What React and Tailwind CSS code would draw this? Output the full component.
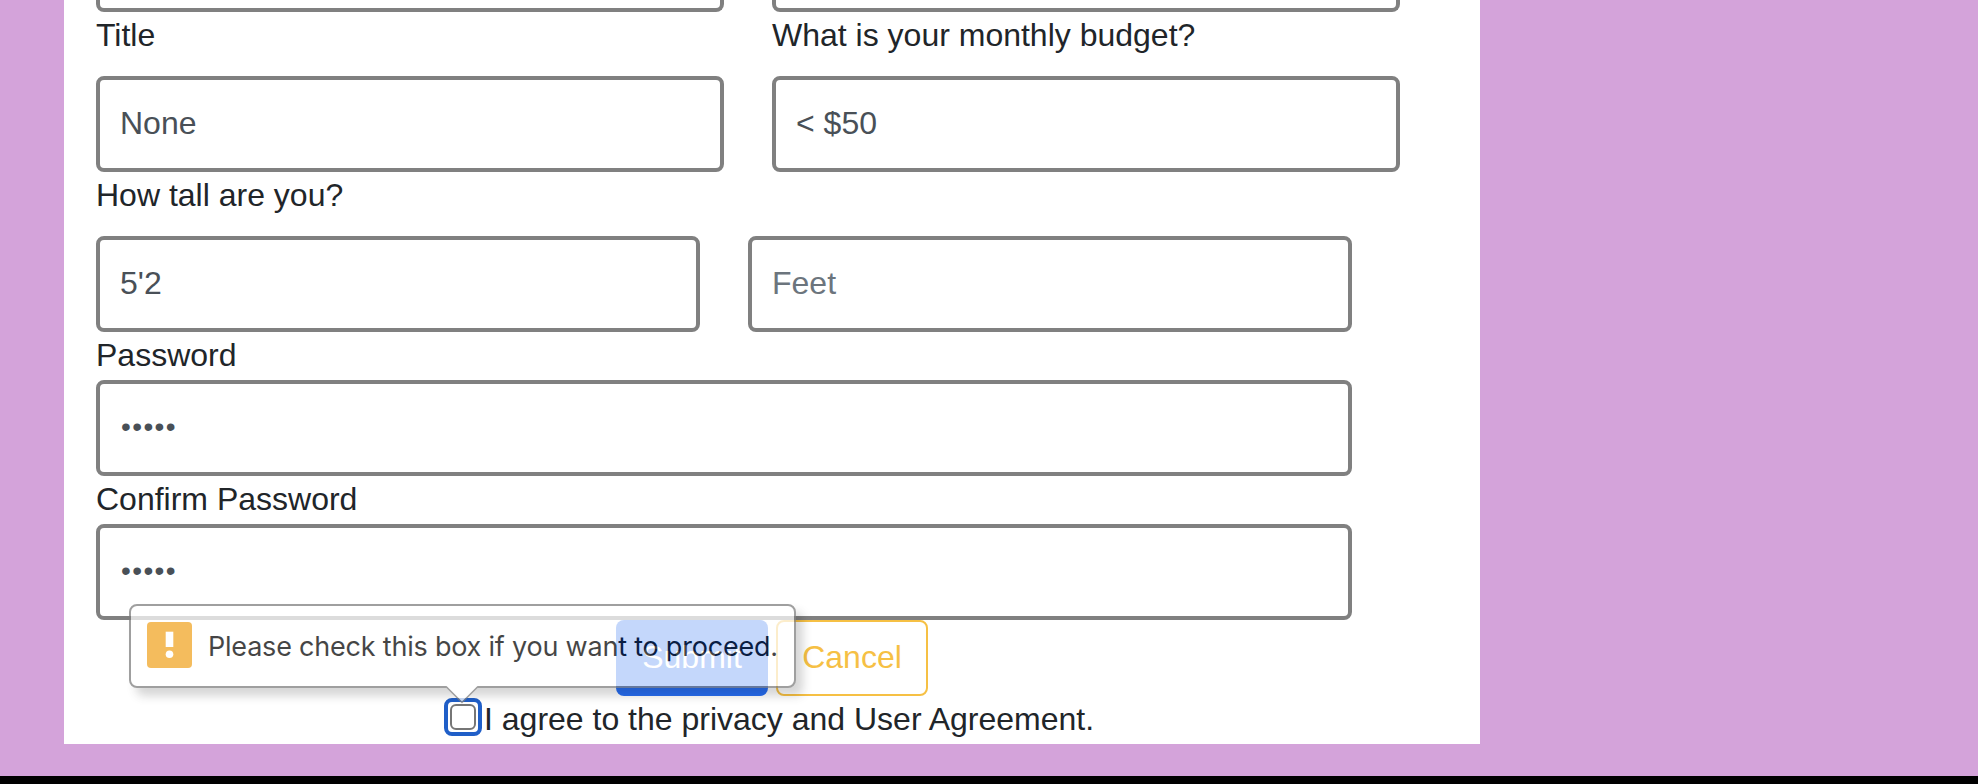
import React from "react";

const fieldBase =
  "block h-24 min-w-0 rounded-lg border-4 border-[#808080] bg-white text-[#495057] outline-none placeholder:text-[#6c757d] placeholder:opacity-100";
const textField = fieldBase + " px-5 pb-0.5 text-[32px]";
const passwordField = fieldBase + " w-[1256px] pl-[21px] pr-5 pb-[3px] text-[28px] tracking-[1.4px]";

function Label({ children }) {
  return <label className="block h-12 text-[32px] leading-[46px] text-[#212529]">{children}</label>;
}

function ValidationBubble({ children }) {
  return (
    <div className="absolute left-[65px] top-[604px] h-[84px] w-[667px] opacity-[0.725]">
      <div className="flex h-full items-start rounded-lg border-2 border-[#7c7c7c] bg-white pl-4 pt-4 shadow-[7px_8px_10px_rgba(0,0,0,0.22)]">
        <svg className="h-[46px] w-[45px] shrink-0" viewBox="0 0 45 46">
          <rect width="45" height="46" rx="4" fill="#f1a421" />
          <rect x="18.7" y="9.7" width="7.6" height="15.3" fill="#fff" />
          <circle cx="22.5" cy="32.3" r="3.8" fill="#fff" />
        </svg>
        <span className="ml-4 mt-[7px] whitespace-nowrap font-['Inter',sans-serif] text-[27px] leading-9 tracking-[-0.21px] text-black">
          {children}
        </span>
      </div>
      <svg className="absolute left-[316px] top-[82px] h-[18px] w-9" viewBox="0 0 36 18">
        <path d="M1 0 L2 1 L17 16.5 L32 1 L33 0 Z" fill="#fff" />
        <path d="M0.5 1 H1.5 L17 16.5 L32.5 1 H33.5" fill="none" stroke="#7c7c7c" strokeWidth="1.5" />
      </svg>
    </div>
  );
}

export default function App() {
  return (
    <div className="flex h-[784px] w-[1978px] flex-col overflow-hidden bg-black font-['Liberation_Sans',Arial,sans-serif]">
      <div className="h-[776px] bg-[#d4a3da] pl-16">
        <main className="relative h-[744px] w-[1416px] bg-white px-8">
          <div className="flex gap-12">
            <div className="h-3 w-[628px] rounded-b-lg border-4 border-t-0 border-[#808080]" />
            <div className="h-3 w-[628px] rounded-b-lg border-4 border-t-0 border-[#808080]" />
          </div>
          <div className="flex gap-12">
            <div className="w-[628px]">
              <Label>Title</Label>
              <input className={textField + " mt-4 w-full"} defaultValue="None" />
            </div>
            <div className="w-[628px]">
              <Label>What is your monthly budget?</Label>
              <input className={textField + " mt-4 w-full"} defaultValue="< $50" />
            </div>
          </div>
          <Label>How tall are you?</Label>
          <div className="mt-4 flex gap-12">
            <input className={textField + " w-[604px]"} defaultValue="5'2" />
            <input className={textField + " w-[604px]"} placeholder="Feet" />
          </div>
          <Label>Password</Label>
          <input type="password" className={passwordField} defaultValue="abcde" />
          <Label>Confirm Password</Label>
          <input type="password" className={passwordField} defaultValue="abcde" />
          <div className="flex justify-center gap-2">
            <button className="h-[76px] w-[152px] rounded-lg bg-[#286ef2] pb-0.5 text-[32px] text-white">Submit</button>
            <button className="h-[76px] w-[152px] rounded-lg border-2 border-[#f6c044] pb-0.5 text-[32px] text-[#f6c044]">
              Cancel
            </button>
          </div>
          <div className="flex h-12 items-start pl-[348px]">
            <span className="mt-0.5 flex size-[38px] shrink-0 items-center justify-center rounded-lg border-4 border-[#205fc8]">
              <input
                type="checkbox"
                className="size-[26px] appearance-none rounded-[6px] border-2 border-[#767676] bg-white"
              />
            </span>
            <span className="ml-0.5 whitespace-nowrap text-[32px] leading-[46px] text-[#212529]">
              I agree to the privacy and User Agreement.
            </span>
          </div>
          <ValidationBubble>Please check this box if you want to proceed.</ValidationBubble>
        </main>
      </div>
    </div>
  );
}
